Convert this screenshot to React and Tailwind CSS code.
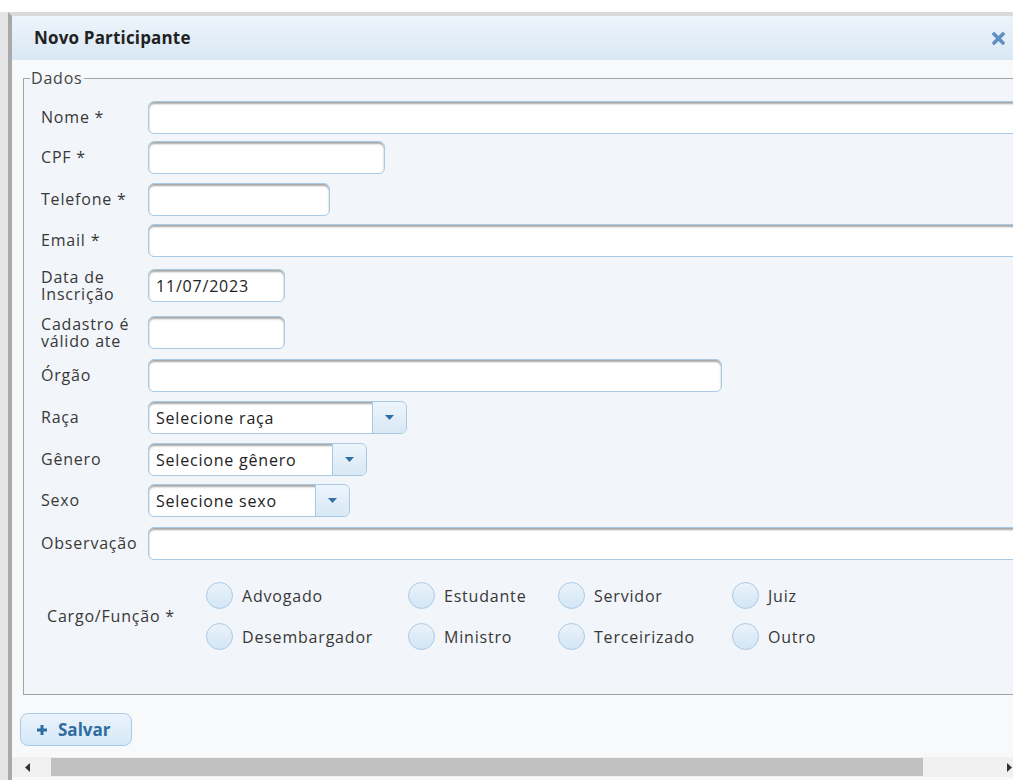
import React from "react";

const rows = [
  { label: ["Nome *"], input: "w-[900px]", gap: "mt-0" },
  { label: ["CPF *"], input: "w-[237px]", gap: "mt-[7px]" },
  { label: ["Telefone *"], input: "w-[182px]", gap: "mt-[9px]" },
  { label: ["Email *"], input: "w-[900px]", gap: "mt-[8px]" },
  { label: ["Data de", "Inscrição"], input: "w-[137px]", gap: "mt-[12px]", value: "11/07/2023" },
  { label: ["Cadastro é", "válido ate"], input: "w-[137px]", gap: "mt-[14px]" },
  { label: ["Órgão"], input: "w-[574px]", gap: "mt-[10px]" },
];

const selects = [
  { label: "Raça", text: "Selecione raça", width: "w-[259px]", gap: "mt-[9px]" },
  { label: "Gênero", text: "Selecione gênero", width: "w-[219px]", gap: "mt-[9px]" },
  { label: "Sexo", text: "Selecione sexo", width: "w-[202px]", gap: "mt-[8px]" },
];

const cargos = [
  "Advogado",
  "Estudante",
  "Servidor",
  "Juiz",
  "Desembargador",
  "Ministro",
  "Terceirizado",
  "Outro",
];

const inputBox =
  "h-[33px] rounded-[6px] border border-[#a9c9e4] bg-white shadow-[inset_0_2px_2px_rgba(0,0,0,0.35)]";

const Caret = () => (
  <svg width="9" height="5" viewBox="0 0 9 5">
    <path d="M0 0h9L4.5 5z" fill="#2f6fa6" />
  </svg>
);

// fixed-height row: two-line labels hang over the row edges instead of growing it
const FormRow = ({ label, gap, children }) => (
  <div className={`flex h-[33px] items-center ${gap}`}>
    <div className="w-[107px] shrink-0 leading-[17px] text-[#383838]">
      {label.map((l) => (
        <div key={l}>{l}</div>
      ))}
    </div>
    {children}
  </div>
);

const Radio = ({ label }) => (
  <label className="flex items-center gap-[9px]">
    <span className="h-[27px] w-[27px] rounded-full border border-[#a9c9e4] bg-gradient-to-b from-[#eaf3fb] to-[#d3e5f5]" />
    <span className="text-[#383838]">{label}</span>
  </label>
);

export default function App() {
  return (
    <div className="h-[780px] w-full overflow-hidden bg-white pt-[12px] font-['Open_Sans',sans-serif] text-[16px] tracking-[0.05em]">
      <div className="flex h-full">
        <div className="w-[8px] shrink-0 bg-[#e2e4e6]" />
        <div className="flex w-[1005px] shrink-0 flex-col overflow-hidden border-l-[4px] border-t-[4px] border-l-[#a9a9a9] border-t-[#dadada] bg-[#f2f5f9]">
          {/* title bar */}
          <div className="flex h-[44px] shrink-0 items-center justify-between bg-gradient-to-b from-[#edf4fb] to-[#d9e8f4] pl-[22px] pr-[8px]">
            <span className="text-[17px] font-bold tracking-[0.01em] text-[#222]">Novo Participante</span>
            <svg width="13" height="13" viewBox="0 0 13 13">
              <path d="M2 2l9 9M11 2l-9 9" stroke="#5f90c2" strokeWidth="3.6" strokeLinecap="round" />
            </svg>
          </div>

          <div className="flex-1 bg-[#f7f9fb] pt-[6px]">
            <fieldset className="ml-[11px] h-[629px] w-[1100px] border border-[#a3a3a3] bg-[#f2f5f9] pl-[17px] pt-[11px]">
              <legend className="-ml-[11px] px-[1px] text-[#444]">Dados</legend>

              {rows.map((r) => (
                <FormRow key={r.label[0]} label={r.label} gap={r.gap}>
                  <div className={`${inputBox} ${r.input} flex items-center px-[7px] text-[#222]`}>{r.value}</div>
                </FormRow>
              ))}

              {selects.map((s) => (
                <FormRow key={s.label} label={[s.label]} gap={s.gap}>
                  <div className={`${inputBox} ${s.width} flex overflow-hidden`}>
                    <div className="flex flex-1 items-center px-[7px] text-[#222]">{s.text}</div>
                    <div className="flex w-[34px] items-center justify-center border-l border-[#a9c9e4] bg-gradient-to-b from-[#edf5fc] to-[#d8e8f5]">
                      <Caret />
                    </div>
                  </div>
                </FormRow>
              ))}

              <FormRow label={["Observação"]} gap="mt-[10px]">
                <div className={`${inputBox} w-[900px]`} />
              </FormRow>

              <div className="mt-[22px] flex items-center">
                <div className="w-[165px] shrink-0 pl-[6px] text-[#383838]">Cargo/Função *</div>
                <div className="grid grid-cols-[202px_150px_174px_auto] gap-y-[14px]">
                  {cargos.map((c) => (
                    <Radio key={c} label={c} />
                  ))}
                </div>
              </div>
            </fieldset>

            <button className="ml-[8px] mt-[18px] flex h-[33px] w-[112px] items-center gap-[10px] rounded-[8px] border border-[#a9cbe8] bg-gradient-to-b from-[#eaf3fc] to-[#d6e8f7] pl-[15px] text-[17px] font-bold tracking-normal text-[#2f6d9f]">
              <svg width="12" height="12" viewBox="0 0 12 12">
                <path d="M6 1v10M1 6h10" stroke="#2f6d9f" strokeWidth="3" />
              </svg>
              Salvar
            </button>

            {/* horizontal scrollbar */}
            <div className="mt-[11px] flex h-[20px] items-center bg-[#f0f0f0]">
              <div className="flex w-[39px] justify-start pl-[13px]">
                <svg width="5" height="9" viewBox="0 0 5 9">
                  <path d="M5 0v9L0 4.5z" fill="#333" />
                </svg>
              </div>
              <div className="h-[18px] w-[872px] bg-[#c1c1c1]" />
              <div className="flex flex-1 justify-end pr-[1px]">
                <svg width="5" height="9" viewBox="0 0 5 9">
                  <path d="M0 0v9L5 4.5z" fill="#333" />
                </svg>
              </div>
            </div>
          </div>
        </div>
      </div>
    </div>
  );
}
